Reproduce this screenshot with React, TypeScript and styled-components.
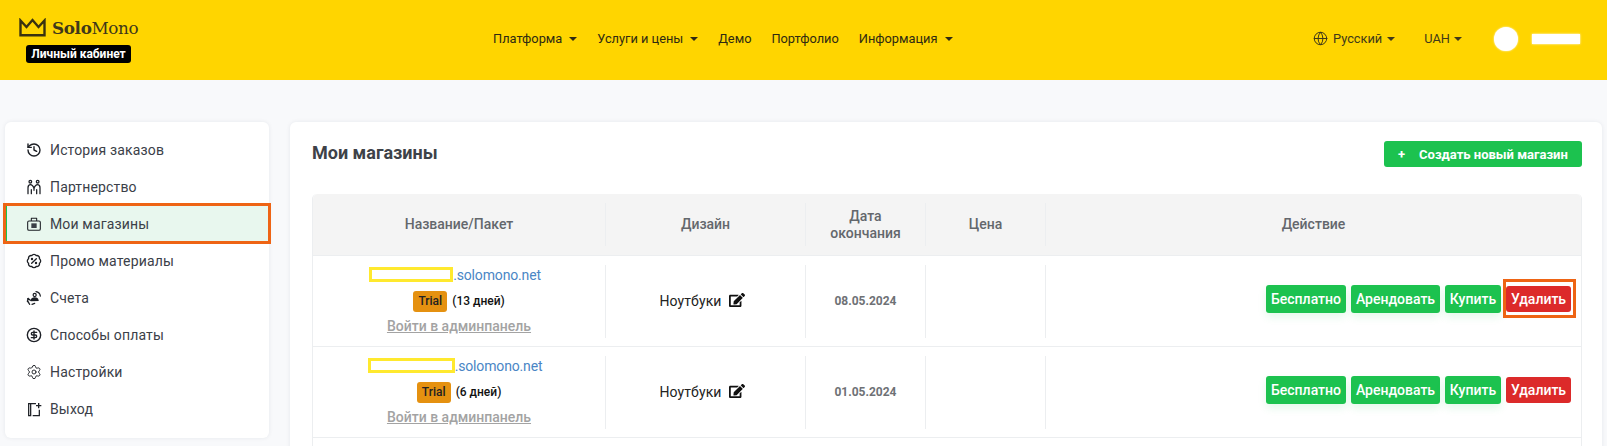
import { FC, ReactNode } from "react";
import styled, { createGlobalStyle } from "styled-components";
import { CircleDollarSign, Globe, History, Settings } from "lucide-react";
import { FaEdit } from "react-icons/fa";

const GlobalStyle = createGlobalStyle`
  html, body {
    margin: 0;
    height: 446px;
    overflow: hidden;
    background: #f8f9fb;
    font-family: Roboto, "Noto Sans", sans-serif;
  }
`;

const Page = styled.div`
  height: 446px;
  overflow: hidden;
`;

const Header = styled.header`
  height: 80px;
  background: #ffd500;
  display: flex;
  color: #3f3a1a;
  font-size: 12.8px;
`;

const LogoBlock = styled.div`
  width: 493px;
  flex: none;
  padding: 17px 0 0 19px;
  box-sizing: border-box;
`;

const LogoRow = styled.div`
  display: flex;
  align-items: center;
  gap: 6px;
  height: 21px;
`;

const LogoText = styled.span`
  font-family: "DejaVu Serif", "Liberation Serif", serif;
  font-size: 16.8px;
  letter-spacing: -0.35px;
  color: #40381a;
  b {
    font-weight: 700;
  }
`;

const CabinetBadge = styled.div`
  margin: 7px 0 0 7px;
  width: 105px;
  height: 18px;
  background: #000;
  border-radius: 3px;
  color: #fff;
  font-size: 12px;
  font-weight: 700;
  line-height: 18px;
  text-align: center;
`;

const Nav = styled.nav`
  display: flex;
  align-items: center;
  gap: 20px;
  width: 800px;
  flex: none;
  height: 76px;
`;

const NavLink = styled.span`
  display: inline-flex;
  align-items: center;
  gap: 7px;
  color: #2e2a12;
  white-space: nowrap;
`;

const Caret = styled.i`
  width: 0;
  height: 0;
  border-left: 4px solid transparent;
  border-right: 4px solid transparent;
  border-top: 4px solid currentColor;
  margin-top: 2px;
`;

const RightTools = styled.div`
  display: flex;
  align-items: center;
  height: 78px;
  margin-left: 20px;
`;

const Language = styled(NavLink)`
  gap: 5px;
  margin-right: 29px;
  padding-bottom: 2px;
  color: #40391a;
`;

const Currency = styled(NavLink)`
  gap: 4px;
  margin-right: 32px;
  padding-bottom: 2px;
  color: #40391a;
`;

const Avatar = styled.div`
  width: 24px;
  height: 24px;
  border-radius: 50%;
  background: #fff;
  margin-right: 14px;
  box-shadow: 0 0 2px #fff;
`;

const UserName = styled.div`
  width: 48px;
  height: 10px;
  background: #fff;
  box-shadow: 0 0 2px #fff;
`;

const Content = styled.main`
  display: flex;
  gap: 21px;
  padding: 42px 5px 0;
  align-items: flex-start;
`;

const Sidebar = styled.aside`
  width: 264px;
  height: 316px;
  flex: none;
  box-sizing: border-box;
  padding-top: 9px;
  background: #fff;
  border-radius: 6px;
  box-shadow: 0 0 4px rgba(30, 40, 60, 0.08);
`;

const MenuItem = styled.div<{ $active?: boolean }>`
  height: 37px;
  display: flex;
  align-items: center;
  gap: 8px;
  padding-left: ${(p) => (p.$active ? "19px" : "21px")};
  border-left: ${(p) => (p.$active ? "2px solid #1cc24f" : "0")};
  background: ${(p) => (p.$active ? "#e8f7ee" : "transparent")};
  outline: ${(p) => (p.$active ? "3px solid #ee6414" : "0")};
  outline-offset: -1px;
  font-size: 14px;
  letter-spacing: 0.15px;
  color: #3b4048;
  svg {
    flex: none;
    color: #1d2026;
  }
`;

const Card = styled.section`
  flex: 1;
  height: 420px;
  box-sizing: border-box;
  padding: 19px 20px 0 22px;
  background: #fff;
  border-radius: 6px 6px 0 0;
  box-shadow: 0 0 4px rgba(30, 40, 60, 0.08);
`;

const CardHead = styled.div`
  display: flex;
  justify-content: space-between;
  align-items: center;
  height: 26px;
  margin-bottom: 27px;
`;

const Title = styled.h1`
  margin: 0 0 4px;
  font-size: 18px;
  font-weight: 700;
  color: #3e4248;
`;

const CreateButton = styled.button`
  width: 198px;
  height: 26px;
  border: 0;
  border-radius: 3px;
  background: #1cc24f;
  color: #fff;
  font: 700 13px Roboto, sans-serif;
  display: flex;
  align-items: center;
  padding: 0 0 0 14px;
  gap: 14px;
`;

const Table = styled.div`
  border-left: 1px solid #eceef0;
  border-right: 1px solid #eceef0;
  border-radius: 5px 5px 0 0;
`;

const Row = styled.div<{ $head?: boolean }>`
  display: grid;
  grid-template-columns: 293px 200px 120px 120px 1fr;
  height: ${(p) => (p.$head ? "62px" : "91px")};
  box-sizing: border-box;
  border-bottom: 1px solid #eceef0;
  background: ${(p) => (p.$head ? "#f4f4f4" : "#fff")};
  padding: ${(p) => (p.$head ? "9px 0" : "9px 0 8px")};
  border-radius: ${(p) => (p.$head ? "5px 5px 0 0" : "0")};
`;

const Cell = styled.div<{ $right?: boolean }>`
  display: flex;
  align-items: center;
  justify-content: ${(p) => (p.$right ? "flex-end" : "center")};
  padding-right: ${(p) => (p.$right ? "10px" : "0")};
  border-right: 1px solid #eceef0;
  &:last-child {
    border-right: 0;
  }
`;

const HeadCell = styled(Cell)`
  font-size: 14px;
  font-weight: 500;
  line-height: 17px;
  color: #63676c;
  text-align: center;
`;

const NameCell = styled(Cell)`
  flex-direction: column;
  padding-bottom: 3px;
`;

const DomainLine = styled.div`
  display: flex;
  align-items: center;
  height: 18px;
  margin: 0 8px 7px 0;
  font-size: 14px;
  font-weight: 400;
  letter-spacing: -0.15px;
  color: #4a86c5;
`;

const HiddenName = styled.span<{ $width: number }>`
  display: block;
  width: ${(p) => p.$width}px;
  height: 15px;
  box-sizing: border-box;
  border: 3px solid #ffe92e;
  background: #fff;
`;

const PlanLine = styled.div`
  display: flex;
  align-items: center;
  gap: 5px;
  height: 21px;
  font-size: 12px;
  font-weight: 500;
  color: #111;
`;

const TrialBadge = styled.span`
  width: 34px;
  height: 21px;
  background: #e59110;
  border-radius: 3px;
  line-height: 21px;
  text-align: center;
  color: #222;
`;

const AdminLink = styled.a`
  margin-top: 5px;
  font-size: 14px;
  font-weight: 500;
  line-height: 18px;
  color: #a3a3a3;
  text-decoration: underline;
`;

const DesignName = styled.span`
  display: flex;
  align-items: center;
  gap: 7px;
  font-size: 14px;
  letter-spacing: 0.1px;
  color: #222;
  padding-bottom: 2px;
  margin-left: -7px;
  svg {
    margin-bottom: 2px;
  }
`;

const DateText = styled.span`
  font-size: 12px;
  font-weight: 700;
  color: #6e7175;
  padding-bottom: 2px;
`;

const Actions = styled.div`
  display: flex;
  align-items: center;
  gap: 5px;
  margin-bottom: 6px;
`;

const ActionButton = styled.button<{ $danger?: boolean; $marked?: boolean; $width: number }>`
  position: relative;
  width: ${(p) => p.$width}px;
  height: ${(p) => (p.$danger ? "26px" : "28px")};
  padding: 0;
  border: 0;
  border-radius: 3px;
  background: ${(p) => (p.$danger ? "#dc2a2a" : "#1cc24f")};
  color: #fff;
  font: 500 14px Roboto, sans-serif;
  white-space: nowrap;
  box-shadow: ${(p) => (p.$danger ? "none" : "0 4px 8px rgba(28, 194, 79, 0.12)")};
  &::after {
    content: "";
    display: ${(p) => (p.$marked ? "block" : "none")};
    position: absolute;
    inset: -7px -5px -6px -3px;
    border: 3px solid #ee6414;
  }
`;

const icon = { width: 16, height: 16, viewBox: "0 0 24 24", fill: "none", stroke: "currentColor", strokeWidth: 1.9 };

const PartnerIcon: FC = () => (
  <svg {...icon} strokeLinecap="round" strokeLinejoin="round">
    <circle cx="6.500" cy="4" r="2" />
    <circle cx="17.500" cy="4" r="2" />
    <path d="M3 22v-9c0-3 1.500-4.500 4-4.500 2 0 3 1 5 5 2-4 3-5 5-5 2.500 0 4 1.500 4 4.500v9" />
    <path d="M8 22v-6M16 22v-6M12 14v3" />
  </svg>
);

const ShopIcon: FC = () => (
  <svg {...icon} strokeWidth={1.6} strokeLinejoin="round">
    <rect x="2.500" y="7.500" width="19" height="14" rx="2" />
    <path d="M8 7.500V3.500h8v4" />
    <rect x="8" y="11" width="8" height="7" fill="#3a3f46" stroke="none" />
  </svg>
);

const PromoIcon: FC = () => (
  <svg {...icon} strokeWidth={2} strokeLinecap="round">
    <path d="M3.850 8.620a4 4 0 0 1 4.780-4.770 4 4 0 0 1 6.740 0 4 4 0 0 1 4.780 4.780 4 4 0 0 1 0 6.740 4 4 0 0 1-4.770 4.780 4 4 0 0 1-6.750 0 4 4 0 0 1-4.780-4.770 4 4 0 0 1 0-6.760Z" />
    <path d="M15.500 8.500l-7 7" />
    <circle cx="9" cy="9" r="1.800" fill="currentColor" stroke="none" />
    <circle cx="15" cy="15" r="1.800" fill="currentColor" stroke="none" />
  </svg>
);

const InvoiceIcon: FC = () => (
  <svg {...icon} strokeLinecap="round">
    <circle cx="13" cy="7.500" r="2.300" />
    <path d="M8 16c0-3 2.500-4 5-4s4.500 1 5 3.500z" fill="currentColor" />
    <path d="M15 2.500c3.500.5 6 3 6.500 6.500M2.500 13c-.5 3 .5 6 3 8.500M2 17l1.500-4 3 2.500M9 21.500l4-1.500" />
  </svg>
);

const ExitIcon: FC = () => (
  <svg {...icon} strokeLinecap="square">
    <path d="M14 4H4v18h3M7 4v18M20 14v8H11" />
    <path d="M19 4v6M16 7h6" strokeWidth="2" />
  </svg>
);

const CrownIcon: FC = () => (
  <svg width="27" height="19" viewBox="0 0 27 19" fill="none" stroke="#3a3210" strokeWidth="2.400">
    <path d="M1.500 2.500 L7.500 9 L13.500 2 L19.500 9 L25.500 2.500 V17.200 H1.500 Z" strokeLinejoin="miter" />
  </svg>
);

const menu: { label: string; pic: ReactNode; active?: boolean }[] = [
  { label: "История заказов", pic: <History size={16} strokeWidth={2.1} /> },
  { label: "Партнерство", pic: <PartnerIcon /> },
  { label: "Мои магазины", pic: <ShopIcon />, active: true },
  { label: "Промо материалы", pic: <PromoIcon /> },
  { label: "Счета", pic: <InvoiceIcon /> },
  { label: "Способы оплаты", pic: <CircleDollarSign size={16} strokeWidth={2.1} /> },
  { label: "Настройки", pic: <Settings size={16} strokeWidth={1.4} /> },
  { label: "Выход", pic: <ExitIcon /> },
];

const shops = [
  { nameWidth: 84, days: "(13 дней)", date: "08.05.2024", marked: true },
  { nameWidth: 87, days: "(6 дней)", date: "01.05.2024", marked: false },
];

export default function App() {
  return (
    <Page>
      <GlobalStyle />
      <Header>
        <LogoBlock>
          <LogoRow>
            <CrownIcon />
            <LogoText>
              <b>Solo</b>Mono
            </LogoText>
          </LogoRow>
          <CabinetBadge>Личный кабинет</CabinetBadge>
        </LogoBlock>
        <Nav>
          <NavLink>Платформа <Caret /></NavLink>
          <NavLink>Услуги и цены <Caret /></NavLink>
          <NavLink>Демо</NavLink>
          <NavLink>Портфолио</NavLink>
          <NavLink>Информация <Caret /></NavLink>
        </Nav>
        <RightTools>
          <Language><Globe size={15} strokeWidth={1.6} /> Русский <Caret /></Language>
          <Currency>UAH <Caret /></Currency>
          <Avatar />
          <UserName />
        </RightTools>
      </Header>
      <Content>
        <Sidebar>
          {menu.map((item) => (
            <MenuItem key={item.label} $active={item.active}>
              {item.pic}
              {item.label}
            </MenuItem>
          ))}
        </Sidebar>
        <Card>
          <CardHead>
            <Title>Мои магазины</Title>
            <CreateButton><span>+</span> Создать новый магазин</CreateButton>
          </CardHead>
          <Table>
            <Row $head>
              <HeadCell>Название/Пакет</HeadCell>
              <HeadCell>Дизайн</HeadCell>
              <HeadCell>Дата<br />окончания</HeadCell>
              <HeadCell>Цена</HeadCell>
              <HeadCell>Действие</HeadCell>
            </Row>
            {shops.map((shop) => (
              <Row key={shop.date}>
                <NameCell>
                  <DomainLine>
                    <HiddenName $width={shop.nameWidth} />.solomono.net
                  </DomainLine>
                  <PlanLine>
                    <TrialBadge>Trial</TrialBadge> {shop.days}
                  </PlanLine>
                  <AdminLink>Войти в админпанель</AdminLink>
                </NameCell>
                <Cell>
                  <DesignName>Ноутбуки <FaEdit size={16} color="#111" /></DesignName>
                </Cell>
                <Cell><DateText>{shop.date}</DateText></Cell>
                <Cell />
                <Cell $right>
                  <Actions>
                    <ActionButton $width={80}>Бесплатно</ActionButton>
                    <ActionButton $width={89}>Арендовать</ActionButton>
                    <ActionButton $width={56}>Купить</ActionButton>
                    <ActionButton $width={65} $danger $marked={shop.marked}>Удалить</ActionButton>
                  </Actions>
                </Cell>
              </Row>
            ))}
            <Row />
          </Table>
        </Card>
      </Content>
    </Page>
  );
}
